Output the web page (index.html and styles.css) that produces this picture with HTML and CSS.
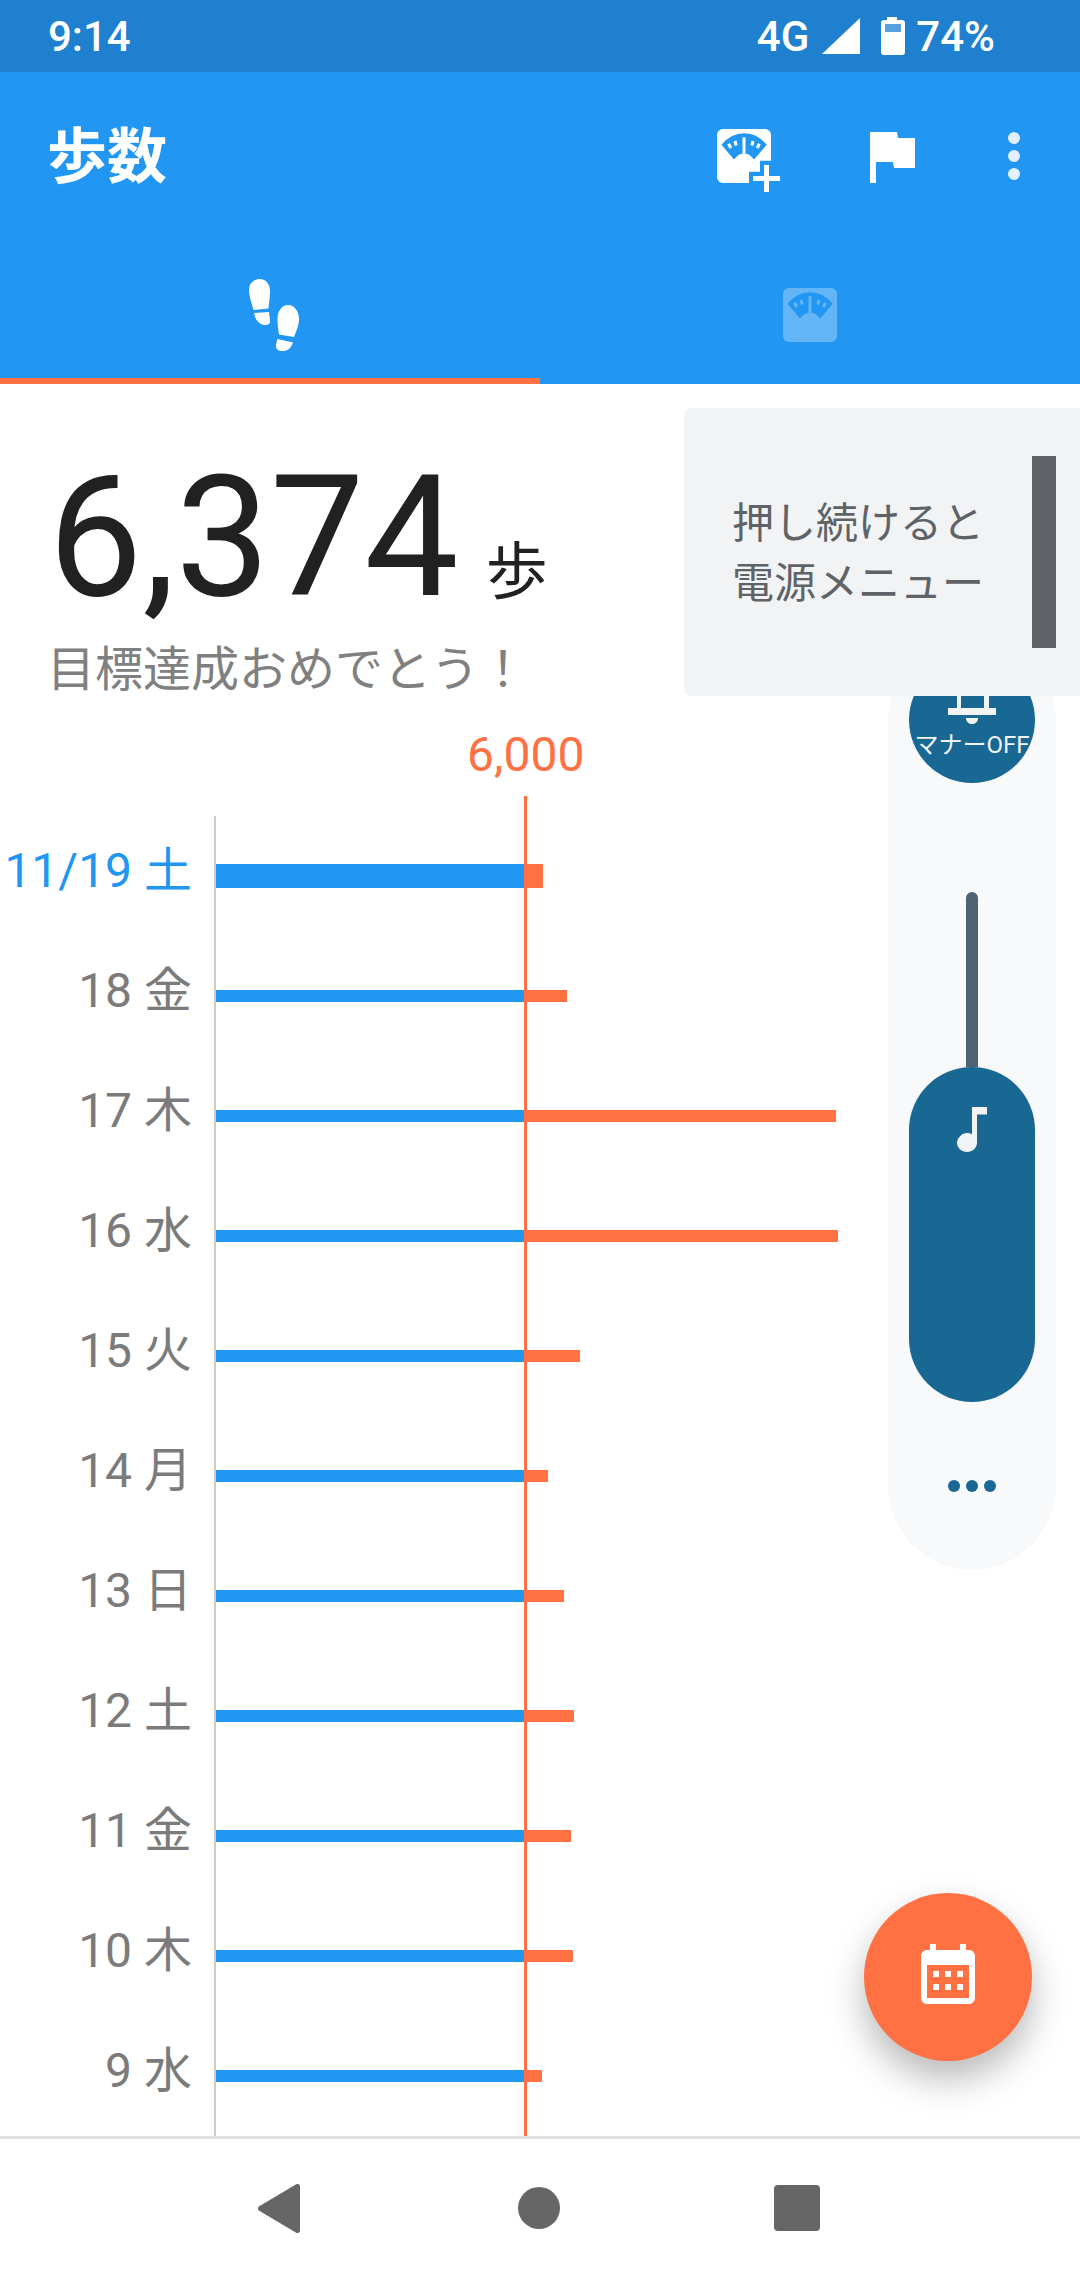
FILE: index.html
```html
<!DOCTYPE html>
<html>
<head>
    <meta charset="utf-8">
    <link rel="stylesheet" href="styles.css">
</head>
<body>
    <svg class="defs">
        <symbol id="scale" viewBox="0 0 54 54">
            <rect width="54" height="54" rx="6" fill="#fff"/>
            <path d="M4.5 15.7Q14 4.3 27 4.3T49.8 15.7L37 30.5Q32 24.3 27 24.3T17 30.5Z" fill="#2196f3"/>
            <path d="M27 8.3V24.3M11.6 14.8l2.2 4.2M18 12l1.2 4.5M36 12l-1.2 4.5M42.4 14.8l-2.2 4.2" stroke="#fff" stroke-width="3" fill="none"/>
        </symbol>
    </svg>

    <div class="status">
        <span class="time">9:14</span>
        <div class="status-right">
            <span>4G</span>
            <svg class="signal" width="38" height="36" viewBox="0 0 38 36"><path d="M38 0V36H0Z" fill="#fff"/></svg>
            <svg class="battery" width="24" height="38" viewBox="0 0 24 38">
                <path d="M6 0H16V3H21Q24 3 24 6V35Q24 38 21 38H3Q0 38 0 35V6Q0 3 3 3H6Z" fill="#fff"/>
                <rect x="4" y="7" width="16" height="8" fill="#1e80cf" opacity="0.75"/>
            </svg>
            <span>74%</span>
        </div>
    </div>

    <div class="appbar">
        <div class="toolbar">
            <span class="title">歩数</span>
            <svg class="act-scale" width="63" height="72" viewBox="0 -9 63 72">
                <use href="#scale" width="54" height="54"/>
                <path d="M32 54V42.7H43V31.7H54V54Z" fill="#2196f3"/>
                <path d="M36 49.500H63M49.500 36V63" stroke="#fff" stroke-width="5"/>
            </svg>
            <svg class="act-flag" width="72" height="72" viewBox="0 0 24 24"><path d="M14.400 6L14 4H5v17h2v-7h5.600l.4 2h7V6z" fill="#fff"/></svg>
            <svg class="act-more" width="72" height="72" viewBox="0 0 72 72">
                <g fill="#fff" opacity="0.87">
                    <circle cx="36" cy="18" r="6"/>
                    <circle cx="36" cy="36" r="6"/>
                    <circle cx="36" cy="54" r="6"/>
                </g>
            </svg>
        </div>
        <div class="tabs">
            <div class="tab active">
                <svg class="steps-icon" width="50" height="72" viewBox="0 0 50 72" fill="#fff">
                    <path d="M11 0C17 0 21 5 21 12C21 18 20 24 19.500 29.500L4.500 31C2.500 24 0 17 0 11C0 4 5 0 11 0Z"/>
                    <path d="M5 34L20 33L21 42C21 45 19 46 16 46C10 46 6 40 5 34Z"/>
                    <path d="M39 26C45 26 50 32 50 40C50 46 47 53 45 58L30 55.500C29 49 28.500 45 28.500 40C28.500 32 33 26 39 26Z"/>
                    <path d="M28.500 60L44 63.500C42 68 40 72 34 72C29 72 27 70 27 67C27 65 28 62 28.500 60Z"/>
                </svg>
            </div>
            <div class="tab">
                <svg class="scale-tab" width="54" height="54"><use href="#scale" width="54" height="54"/></svg>
            </div>
        </div>
    </div>

    <div class="content">
        <div class="summary">
            <span class="count">6,374</span>
            <span class="unit">歩</span>
        </div>
        <div class="message">目標達成おめでとう！</div>
        <div class="goal-label">6,000</div>

        <div class="chart">
            <div class="axis"></div>
            <div class="goal-line"></div>

            <div class="row today">
                <span class="day">11/19 土</span>
                <div class="bar-base"></div>
                <div class="bar-over" style="width: 18px"></div>
            </div>
            <div class="row">
                <span class="day">18 金</span>
                <div class="bar-base"></div>
                <div class="bar-over" style="width: 42px"></div>
            </div>
            <div class="row">
                <span class="day">17 木</span>
                <div class="bar-base"></div>
                <div class="bar-over" style="width: 311px"></div>
            </div>
            <div class="row">
                <span class="day">16 水</span>
                <div class="bar-base"></div>
                <div class="bar-over" style="width: 313px"></div>
            </div>
            <div class="row">
                <span class="day">15 火</span>
                <div class="bar-base"></div>
                <div class="bar-over" style="width: 55px"></div>
            </div>
            <div class="row">
                <span class="day">14 月</span>
                <div class="bar-base"></div>
                <div class="bar-over" style="width: 23px"></div>
            </div>
            <div class="row">
                <span class="day">13 日</span>
                <div class="bar-base"></div>
                <div class="bar-over" style="width: 39px"></div>
            </div>
            <div class="row">
                <span class="day">12 土</span>
                <div class="bar-base"></div>
                <div class="bar-over" style="width: 49px"></div>
            </div>
            <div class="row">
                <span class="day">11 金</span>
                <div class="bar-base"></div>
                <div class="bar-over" style="width: 46px"></div>
            </div>
            <div class="row">
                <span class="day">10 木</span>
                <div class="bar-base"></div>
                <div class="bar-over" style="width: 48px"></div>
            </div>
            <div class="row">
                <span class="day">9 水</span>
                <div class="bar-base"></div>
                <div class="bar-over" style="width: 17px"></div>
            </div>
        </div>
    </div>

    <div class="navbar">
        <div class="nav-cell">
            <svg width="42" height="49" viewBox="0 0 42 49"><path d="M39.500 2.500V46.500L2.500 24.500Z" fill="#666" stroke="#666" stroke-width="5" stroke-linejoin="round"/></svg>
        </div>
        <div class="nav-cell">
            <svg width="42" height="42" viewBox="0 0 42 42"><circle cx="21" cy="21" r="21" fill="#666"/></svg>
        </div>
        <div class="nav-cell recent">
            <svg width="46" height="46" viewBox="0 0 46 46"><rect width="46" height="46" rx="4" fill="#666"/></svg>
        </div>
    </div>

    <div class="volume">
        <div class="ringer">
            <svg class="bell" width="48" height="40" viewBox="0 0 48 40" fill="#f1f3f5">
                <rect x="9" y="0" width="4" height="13"/>
                <rect x="36" y="0" width="5" height="13"/>
                <rect x="0" y="12" width="48" height="7"/>
                <path d="M18 22H30C30 26 27 28 24 28S18 26 18 22Z"/>
            </svg>
            <span class="ringer-text">マナーOFF</span>
        </div>
        <div class="track"></div>
        <div class="thumb">
            <svg width="30" height="45" viewBox="0 0 30 45"><path d="M15 0H30V7.500H20V36C20 41 15 45 10 45S0 41 0 36S5 26 10 26C12 26 14 26.500 15 27.500Z" fill="#f1f3f5"/></svg>
        </div>
        <div class="more-dots">
            <span></span><span></span><span></span>
        </div>
    </div>

    <div class="power-tip">
        <div class="tip-text">押し続けると<br>電源メニュー</div>
        <div class="tip-bar"></div>
    </div>

    <div class="fab">
        <svg width="72" height="72" viewBox="0 0 24 24" fill="#fff">
            <path d="M19 3h-1V1h-2v2H8V1H6v2H5c-1.100 0-2 .9-2 2v14c0 1.100.9 2 2 2h14c1.100 0 2-.9 2-2V5c0-1.100-.9-2-2-2zm0 16H5V8h14v11z"/>
            <path d="M7 10h2v2H7zM11 10h2v2h-2zM15 10h2v2h-2zM7 14.300h2v2H7zM11 14.300h2v2h-2zM15 14.300h2v2h-2z"/>
        </svg>
    </div>
</body>
</html>
```
FILE: styles.css
```css
html, body {
    margin: 0;
    padding: 0;
}
body {
    position: relative;
    width: 1080px;
    height: 2280px;
    overflow: hidden;
    display: flex;
    flex-direction: column;
    background-color: #fff;
    font-family: Roboto, "Noto Sans CJK JP", sans-serif;
}
svg {
    display: block;
}
.defs {
    display: none;
}

.status {
    height: 72px;
    flex: none;
    display: flex;
    align-items: center;
    justify-content: space-between;
    padding: 0 85px 0 48px;
    background-color: #1e80cf;
    color: #fff;
    font-size: 42px;
    font-weight: 500;
}
.status-right {
    display: flex;
    align-items: center;
}
.signal {
    margin-left: 13px;
}
.battery {
    margin-left: 21px;
    margin-right: 11px;
}

.appbar {
    flex: none;
    background-color: #2196f3;
}
.toolbar {
    height: 168px;
    display: flex;
    align-items: center;
    padding-left: 47px;
}
.title {
    color: #fff;
    font-size: 60px;
    font-weight: 700;
    line-height: 72px;
    margin-top: 3px;
}
.act-scale {
    margin-left: auto;
}
.act-flag {
    margin-left: 75px;
}
.act-more {
    margin-left: 51px;
    margin-right: 30px;
}
.tabs {
    height: 144px;
    display: flex;
}
.tab {
    width: 540px;
    box-sizing: border-box;
    display: flex;
    align-items: center;
    justify-content: center;
    padding-top: 12px;
    border-bottom: 6px solid transparent;
}
.tab.active {
    border-bottom-color: #ff7043;
}
.steps-icon {
    margin-left: 8px;
}
.scale-tab {
    opacity: 0.3;
}

.content {
    flex: 1;
    padding-top: 70px;
}
.summary {
    display: flex;
    align-items: baseline;
    padding-left: 48px;
    height: 168px;
    line-height: 168px;
    color: #212121;
}
.count {
    font-size: 168px;
}
.unit {
    font-size: 62px;
    margin-left: 27px;
    position: relative;
    top: -1px;
}
.message {
    margin-top: 18px;
    padding-left: 47px;
    height: 60px;
    line-height: 60px;
    font-size: 48px;
    color: #808080;
}
.goal-label {
    margin-top: 31px;
    padding-left: 467px;
    line-height: 48px;
    font-size: 48px;
    color: #ff7043;
}
.chart {
    position: relative;
    margin-top: 17px;
    padding-top: 20px;
}
.axis {
    position: absolute;
    left: 214px;
    top: 20px;
    bottom: 0;
    width: 2px;
    background-color: #ccc;
}
.goal-line {
    position: absolute;
    left: 524px;
    top: 0;
    bottom: 0;
    width: 3px;
    background-color: #ff7043;
    z-index: 1;
}
.row {
    height: 120px;
    display: flex;
    align-items: center;
}
.day {
    width: 192px;
    margin-right: 24px;
    margin-top: -10px;
    text-align: right;
    font-size: 48px;
    line-height: 60px;
    white-space: nowrap;
    color: #7b7b7b;
}
.bar-base {
    width: 309px;
    height: 12px;
    background-color: #2196f3;
}
.bar-over {
    height: 12px;
    background-color: #ff7043;
}
.today .day {
    color: #2196f3;
}
.today .bar-base, .today .bar-over {
    height: 24px;
}

.navbar {
    height: 144px;
    flex: none;
    box-sizing: border-box;
    display: flex;
    align-items: center;
    gap: 200px;
    padding: 0 0 3px 249px;
    border-top: 3px solid #e0e0e0;
    background-color: #fff;
}
.nav-cell {
    width: 60px;
    display: flex;
    justify-content: center;
}
.nav-cell.recent {
    margin-left: -2px;
}

.volume {
    position: absolute;
    left: 888px;
    top: 636px;
    width: 168px;
    height: 934px;
    box-sizing: border-box;
    padding-top: 21px;
    display: flex;
    flex-direction: column;
    align-items: center;
    background-color: #f8f9fb;
    border-radius: 84px;
}
.ringer {
    position: relative;
    width: 126px;
    height: 126px;
    flex: none;
    overflow: hidden;
    border-radius: 50%;
    background-color: #186893;
}
.bell {
    position: absolute;
    left: 39px;
    top: 39px;
}
.ringer-text {
    position: absolute;
    left: 0;
    right: 0;
    top: 73px;
    line-height: 30px;
    text-align: center;
    white-space: nowrap;
    font-size: 24px;
    color: #f1f3f5;
}
.track {
    width: 12px;
    height: 175px;
    flex: none;
    margin-top: 109px;
    background-color: #4f6272;
    border-radius: 6px 6px 0 0;
}
.thumb {
    width: 126px;
    height: 335px;
    flex: none;
    box-sizing: border-box;
    padding-top: 40px;
    display: flex;
    justify-content: center;
    background-color: #186893;
    border-radius: 63px;
}
.more-dots {
    display: flex;
    gap: 6px;
    margin-top: 78px;
}
.more-dots span {
    width: 12px;
    height: 12px;
    border-radius: 50%;
    background-color: #186893;
}

.power-tip {
    position: absolute;
    left: 684px;
    right: 0;
    top: 408px;
    height: 288px;
    display: flex;
    align-items: center;
    justify-content: space-between;
    padding: 0 24px 0 48px;
    box-sizing: border-box;
    background-color: #f1f3f5;
    border-radius: 8px 0 0 8px;
}
.tip-text {
    font-size: 42px;
    line-height: 60px;
    margin-top: 3px;
    color: #5f6368;
}
.tip-bar {
    width: 24px;
    height: 192px;
    background-color: #5f6368;
}

.fab {
    position: absolute;
    left: 864px;
    top: 1893px;
    width: 168px;
    height: 168px;
    display: flex;
    align-items: center;
    justify-content: center;
    border-radius: 50%;
    background-color: #ff7043;
    box-shadow: 0 18px 36px rgba(0, 0, 0, 0.28);
}
```
